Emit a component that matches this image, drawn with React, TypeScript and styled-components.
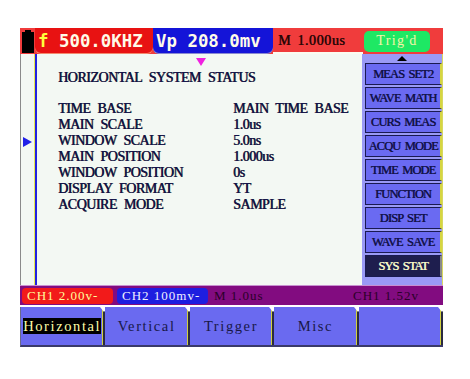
import React from 'react'
import styled, { createGlobalStyle } from 'styled-components'

const GlobalStyle = createGlobalStyle`
  body {
    margin: 0;
    background: #ffffff;
    font-family: "Liberation Serif", serif;
  }
`

const Screen = styled.div`
  margin: 28px 0 0 20px;
  width: 423px;
  display: flex;
  flex-direction: column;
`

const TopBar = styled.div`
  height: 26px;
  display: flex;
  align-items: stretch;
  background: #f03c3c;
`

const Battery = styled.div`
  width: 15px;
  display: flex;
  align-items: center;
  justify-content: center;
`

const Readout = styled.div<{ $bg: string; $w: number }>`
  width: ${(p) => p.$w}px;
  background: ${(p) => p.$bg};
  border-radius: 0 0 6px 6px;
  box-shadow: inset 0 -1px 0 rgba(255, 255, 200, 0.5);
  display: flex;
  align-items: center;
  padding-left: 3px;
  box-sizing: border-box;
  font-family: "DejaVu Sans Mono", monospace;
  font-size: 17.4px;
  font-weight: bold;
  color: #fffbe8;
  white-space: pre;
`

const Accent = styled.span`
  color: #ffff3c;
`

const TimeCell = styled.div`
  width: 90px;
  padding: 5px 0 0 5px;
  box-sizing: border-box;
  font-size: 14px;
  letter-spacing: 0.6px;
  word-spacing: 2px;
  text-shadow: 0.5px 0 0 #2a0606;
  color: #2a0606;
  border-bottom: 2px solid #fbfbf0;
`

const TrigCell = styled.div`
  flex: 1;
  display: flex;
  align-items: center;
  padding-left: 1px;
`

const TrigPill = styled.div`
  width: 66px;
  height: 21px;
  border-radius: 5px;
  background: #1ee864;
  color: #f4f4a8;
  font-size: 14px;
  letter-spacing: 1.4px;
  display: flex;
  align-items: center;
  justify-content: center;
`

const Middle = styled.div`
  height: 231px;
  display: flex;
`

const MainPanel = styled.div`
  position: relative;
  flex: 1;
  background: #f3f8f3;
  border-left: 1px solid #8a8a8a;
  padding-left: 14px;
  display: flex;
`

const Graticule = styled.div`
  flex: 1;
  border-left: 2px solid #2222e0;
  box-shadow: -1px 0 0 #e8e850;
  padding: 16px 0 0 21px;
  color: #12124a;
  font-size: 14px;
  line-height: 16px;
  letter-spacing: -0.5px;
  word-spacing: 4px;
  text-shadow: 0.5px 0 0 #12124a, 1px 0 0 rgba(220, 220, 40, 0.5);
  white-space: pre;
`

const Title = styled.div`
  margin-bottom: 15px;
`

const StatusGrid = styled.div`
  display: grid;
  grid-template-columns: 175px auto;
`

const TrigMarker = styled.div`
  position: absolute;
  left: 175px;
  top: 4px;
  width: 0;
  height: 0;
  border-left: 5px solid transparent;
  border-right: 5px solid transparent;
  border-top: 8px solid #f020e0;
`

const LevelMarker = styled.div`
  position: absolute;
  left: 2px;
  top: 83px;
  width: 0;
  height: 0;
  border-top: 5px solid transparent;
  border-bottom: 5px solid transparent;
  border-left: 9px solid #2020e8;
`

const SideMenu = styled.div`
  width: 80px;
  background: #9a9af6;
  display: flex;
  flex-direction: column;
  border-right: 1px solid #d8d860;
`

const ScrollUp = styled.div`
  height: 9px;
  display: flex;
  justify-content: center;
  align-items: center;

  &::before {
    content: '';
    border-left: 5px solid transparent;
    border-right: 5px solid transparent;
    border-bottom: 5px solid #000;
  }
`

const MenuButton = styled.div<{ $active?: boolean }>`
  height: 22px;
  margin: 0 0 2px 3px;
  background: ${(p) => (p.$active ? '#1e1e4e' : '#6a6af2')};
  color: ${(p) => (p.$active ? '#f6f6c8' : '#12124a')};
  text-shadow: 0.5px 0 0 ${(p) => (p.$active ? '#f6f6c8' : '#12124a')};
  border: 1px solid #1a1a52;
  border-right: 2px solid ${(p) => (p.$active ? '#8a8a8a' : '#d6d640')};
  box-sizing: border-box;
  display: flex;
  align-items: center;
  justify-content: center;
  font-size: 12.5px;
  letter-spacing: -0.9px;
  word-spacing: 2px;
  white-space: pre;
  overflow: hidden;
`

const StatusBar = styled.div`
  height: 20px;
  background: #820c80;
  border-top: 1px solid #c890d0;
  box-sizing: border-box;
  display: flex;
  align-items: center;
  padding-left: 2px;
  gap: 4px;
  font-size: 13px;
  letter-spacing: 1px;
  color: #2a0028;
`

const ChannelPill = styled.div<{ $bg: string }>`
  height: 16px;
  width: 91px;
  background: ${(p) => (p.$bg === 'red' ? '#f21a1a' : '#1e1ee0')};
  color: ${(p) => (p.$bg === 'red' ? '#ffff9c' : '#f0f0ff')};
  border-radius: 4px;
  display: flex;
  align-items: center;
  padding-left: 5px;
  box-sizing: border-box;
  white-space: pre;
`

const StatusText = styled.div<{ $grow?: boolean }>`
  flex: ${(p) => (p.$grow ? 1 : 'none')};
  white-space: pre;
  padding-left: 2px;
`

const TabBar = styled.div`
  height: 38px;
  margin-top: 2px;
  display: grid;
  grid-template-columns: repeat(5, 1fr);
  border-bottom: 2px solid #3a3a6a;
  border-left: 1px solid #6a6a8a;
`

const Tab = styled.div`
  position: relative;
  background: #6a6af0;
  border-right: 2px solid #2a2a40;
  box-shadow: inset -1px 0 0 #d0d040;
  display: flex;
  align-items: center;
  justify-content: center;
  font-size: 14.5px;
  letter-spacing: 1.6px;
  color: #181848;

  &::after {
    content: '';
    position: absolute;
    right: -5px;
    top: 0;
    border-left: 4px solid transparent;
    border-right: 4px solid transparent;
    border-top: 5px solid #ffffff;
  }
`

const TabLabel = styled.span<{ $active?: boolean }>`
  background: ${(p) => (p.$active ? '#000000' : 'transparent')};
  color: ${(p) => (p.$active ? '#ffffa8' : '#181848')};
  padding: 1px 0;
  line-height: 14px;
`

const rows: [string, string][] = [
  ['TIME BASE', 'MAIN TIME BASE'],
  ['MAIN SCALE', '1.0us'],
  ['WINDOW SCALE', '5.0ns'],
  ['MAIN POSITION', '1.000us'],
  ['WINDOW POSITION', '0s'],
  ['DISPLAY FORMAT', 'YT'],
  ['ACQUIRE MODE', 'SAMPLE'],
]

const menu = [
  'MEAS SET2',
  'WAVE MATH',
  'CURS MEAS',
  'ACQU MODE',
  'TIME MODE',
  'FUNCTION',
  'DISP SET',
  'WAVE SAVE',
  'SYS STAT',
]

const tabs = ['Horizontal', 'Vertical', 'Trigger', 'Misc', '']

const App = () => {
  return (
    <>
      <GlobalStyle />
      <Screen>
        <TopBar>
          <Battery>
            <svg width="12" height="23" viewBox="0 0 12 23">
              <rect x="3" y="0" width="6" height="3" fill="#000" />
              <rect x="0" y="2" width="12" height="21" fill="#000" />
            </svg>
          </Battery>
          <Readout $bg="#e81212" $w={118}>
            <Accent>f</Accent> 500.0KHZ
          </Readout>
          <Readout $bg="#1414d8" $w={120}>Vp 208.0mv</Readout>
          <TimeCell>M 1.000us</TimeCell>
          <TrigCell>
            <TrigPill>Trig'd</TrigPill>
          </TrigCell>
        </TopBar>
        <Middle>
          <MainPanel>
            <TrigMarker />
            <LevelMarker />
            <Graticule>
              <Title>HORIZONTAL SYSTEM STATUS</Title>
              <StatusGrid>
                {rows.map(([label, value]) => (
                  <React.Fragment key={label}>
                    <span>{label}</span>
                    <span>{value}</span>
                  </React.Fragment>
                ))}
              </StatusGrid>
            </Graticule>
          </MainPanel>
          <SideMenu>
            <ScrollUp />
            {menu.map((item) => (
              <MenuButton key={item} $active={item === 'SYS STAT'}>{item}</MenuButton>
            ))}
          </SideMenu>
        </Middle>
        <StatusBar>
          <ChannelPill $bg="red">CH1 2.00v-</ChannelPill>
          <ChannelPill $bg="blue">CH2 100mv-</ChannelPill>
          <StatusText $grow>M 1.0us</StatusText>
          <StatusText style={{ width: 90 }}>CH1 1.52v</StatusText>
        </StatusBar>
        <TabBar>
          {tabs.map((t, i) => (
            <Tab key={i}>
              <TabLabel $active={i === 0}>{t}</TabLabel>
            </Tab>
          ))}
        </TabBar>
      </Screen>
    </>
  )
}

export default App
